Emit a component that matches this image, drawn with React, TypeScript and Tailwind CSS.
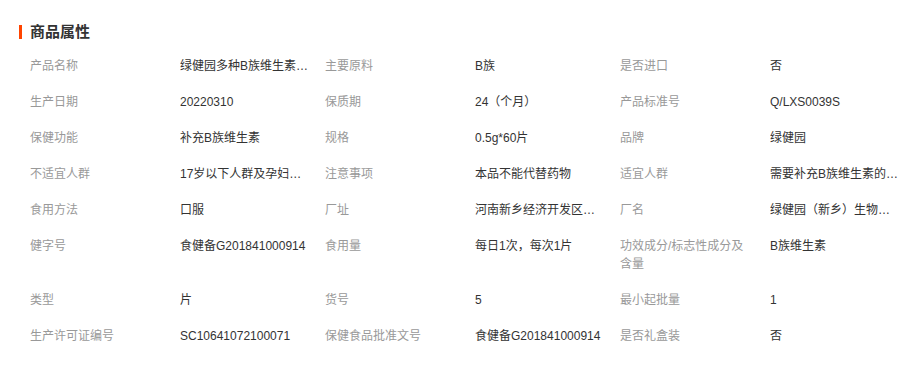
const rows: [string, string][][] = [
  [["产品名称", "绿健园多种B族维生素片 60片"], ["主要原料", "B族"], ["是否进口", "否"]],
  [["生产日期", "20220310"], ["保质期", "24（个月）"], ["产品标准号", "Q/LXS0039S"]],
  [["保健功能", "补充B族维生素"], ["规格", "0.5g*60片"], ["品牌", "绿健园"]],
  [["不适宜人群", "17岁以下人群及孕妇乳母"], ["注意事项", "本品不能代替药物"], ["适宜人群", "需要补充B族维生素的成人"]],
  [["食用方法", "口服"], ["厂址", "河南新乡经济开发区纬七路"], ["厂名", "绿健园（新乡）生物工程有限公司"]],
  [["健字号", "食健备G201841000914"], ["食用量", "每日1次，每次1片"], ["功效成分/标志性成分及含量", "B族维生素"]],
  [["类型", "片"], ["货号", "5"], ["最小起批量", "1"]],
  [["生产许可证编号", "SC10641072100071"], ["保健食品批准文号", "食健备G201841000914"], ["是否礼盒装", "否"]],
];

export default function App() {
  return (
    <div
      className="h-[365px] w-[910px] bg-white text-[12px] leading-[18px]"
      style={{ fontFamily: '"Liberation Sans", "Noto Sans CJK SC", sans-serif' }}
    >
      <div className="flex items-center pl-[19px] pt-[24px]">
        <span className="h-[14px] w-[3px] bg-[#ff4400]" />
        <h3 className="ml-[8px] text-[15px] font-bold leading-[16px] text-[#333]">商品属性</h3>
      </div>
      <div className="mt-[8px] pl-[30px]">
        {rows.map((row, i) => (
          <div key={i} className="grid grid-cols-[150px_145px_150px_145px_150px_130px] py-[9px]">
            {row.map(([label, value], j) => (
              <>
                <div key={`l${j}`} className="pr-[20px] text-[#999]">
                  {label}
                </div>
                <div key={`v${j}`} className={`truncate text-[#333] ${j === 2 ? "" : "pr-[16px]"}`}>
                  {value}
                </div>
              </>
            ))}
          </div>
        ))}
      </div>
    </div>
  );
}
